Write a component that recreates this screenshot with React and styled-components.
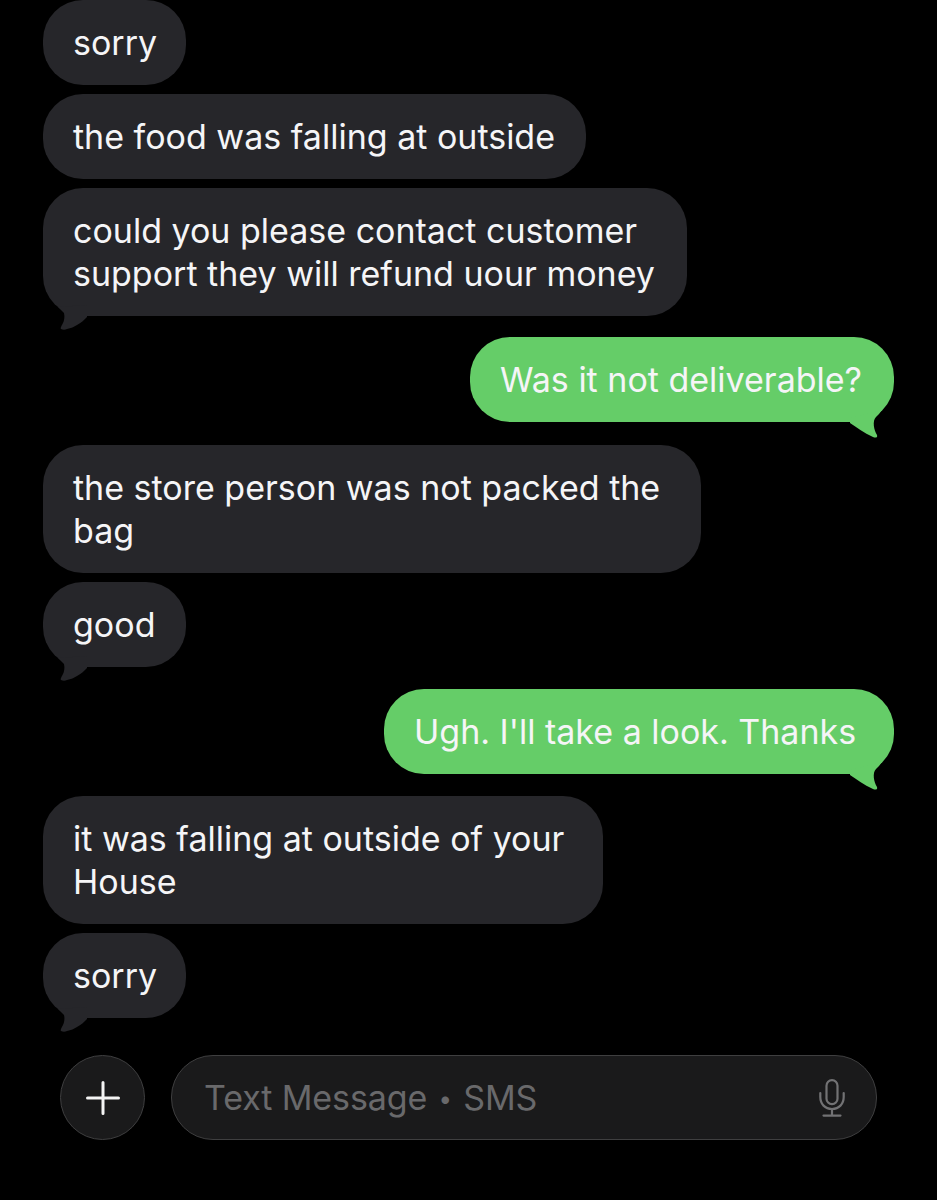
import React from 'react'
import styled, { createGlobalStyle } from 'styled-components'

const messages = [
  { id: 1, text: 'sorry', gap: 0, tail: false, width: 143 },
  { id: 2, text: 'the food was falling at outside', gap: 9, tail: false, width: 543 },
  { id: 3, text: 'could you please contact customer\nsupport they will refund uour money', gap: 9, tail: true, width: 644 },
  { id: 4, text: 'Was it not deliverable?', gap: 21, tail: true, mine: true, width: 424 },
  { id: 5, text: 'the store person was not packed the\nbag', gap: 23, tail: false, width: 658 },
  { id: 6, text: 'good', gap: 9, tail: true, width: 143 },
  { id: 7, text: "Ugh. I'll take a look. Thanks", gap: 22, tail: true, mine: true, width: 510 },
  { id: 8, text: 'it was falling at outside of your\nHouse', gap: 22, tail: false, width: 560 },
  { id: 9, text: 'sorry', gap: 9, tail: true, width: 143 },
]

const App = () => {
  return (
    <Screen>
      <GlobalStyle />
      <Thread>
        {messages.map((m) => (
          <Bubble key={m.id} $mine={m.mine} $gap={m.gap} $width={m.width}>
            {m.text}
            {m.tail && !m.mine && (
              <GrayTail viewBox="0 0 40 36">
                <path d="M5 12 C7 14 9 16 11 18 C12 22 11 26 10 28 C9 30 7 33 8 34 C10 35 12 35 14 34 C18 33 21 32 24 30 C28 28 31 25 34 22 L34 10 Z" fill="#26262a" />
              </GrayTail>
            )}
            {m.tail && m.mine && (
              <GreenTail viewBox="0 0 50 50">
                <path d="M38 20 C36 23 34 25 32 27 C28 31 30 40 33 45 C34 48 31 48 29 47 C20 43 12 37 6 33 L6 28 Z" fill="#65cd68" />
              </GreenTail>
            )}
          </Bubble>
        ))}
      </Thread>
      <Composer>
        <PlusButton>
          <svg width="34" height="34" viewBox="0 0 34 34">
            <path d="M17 1.5 V32.5 M1.5 17 H32.5" stroke="#f4f4f4" strokeWidth="3" strokeLinecap="round" />
          </svg>
        </PlusButton>
        <Field>
          <Placeholder>Text Message<Dot>•</Dot>SMS</Placeholder>
          <svg width="26" height="38" viewBox="0 0 26 38">
            <rect x="7.5" y="1.2" width="11" height="24" rx="5.5" fill="none" stroke="#727274" strokeWidth="2.2" />
            <path d="M1.3 14 V18 C1.3 25 6 30 13 30 C20 30 24.7 25 24.7 18 V14 M13 30 V36.5 M4.5 36.6 H21.5" fill="none" stroke="#727274" strokeWidth="2.2" strokeLinecap="round" />
          </svg>
        </Field>
      </Composer>
    </Screen>
  )
}

export default App

const GlobalStyle = createGlobalStyle`
body {
  margin: 0;
  background: #000;
  font-family: Inter, "Liberation Sans", sans-serif;
}
`

const Screen = styled.div`
width: 937px;
height: 1200px;
overflow: hidden;
background: #000;
box-sizing: border-box;
padding: 0 43px;
`

const Thread = styled.div`
display: flex;
flex-direction: column;
align-items: flex-start;
`

const Bubble = styled.div`
position: relative;
align-self: ${(p) => (p.$mine ? 'flex-end' : 'flex-start')};
margin-top: ${(p) => p.$gap}px;
width: ${(p) => p.$width}px;
box-sizing: border-box;
padding: 21px 30px;
border-radius: 40px;
background: ${(p) => (p.$mine ? '#65cd68' : '#26262a')};
color: #f5f5f7;
font-size: 34px;
line-height: 43px;
white-space: pre-line;
`

const GrayTail = styled.svg`
position: absolute;
left: 10px;
bottom: -15px;
width: 40px;
height: 36px;
`

const GreenTail = styled.svg`
position: absolute;
right: 0;
bottom: -18px;
width: 50px;
height: 50px;
`

const Composer = styled.div`
display: flex;
align-items: center;
gap: 26px;
margin-top: 37px;
padding: 0 17px;
`

const PlusButton = styled.div`
flex: none;
display: flex;
align-items: center;
justify-content: center;
width: 85px;
height: 85px;
box-sizing: border-box;
border-radius: 50%;
background: #1a1a1b;
border: 1.5px solid #3f3f40;
`

const Field = styled.div`
flex: 1;
display: flex;
align-items: center;
justify-content: space-between;
height: 85px;
box-sizing: border-box;
padding: 0 31px 0 32px;
border-radius: 42px;
background: #1a1a1b;
border: 1.5px solid #3f3f40;
`

const Placeholder = styled.span`
color: #69696b;
font-size: 34px;
letter-spacing: -0.1px;
`

const Dot = styled.span`
display: inline-block;
width: 36px;
text-align: center;
font-size: 24px;
vertical-align: 3px;
`
